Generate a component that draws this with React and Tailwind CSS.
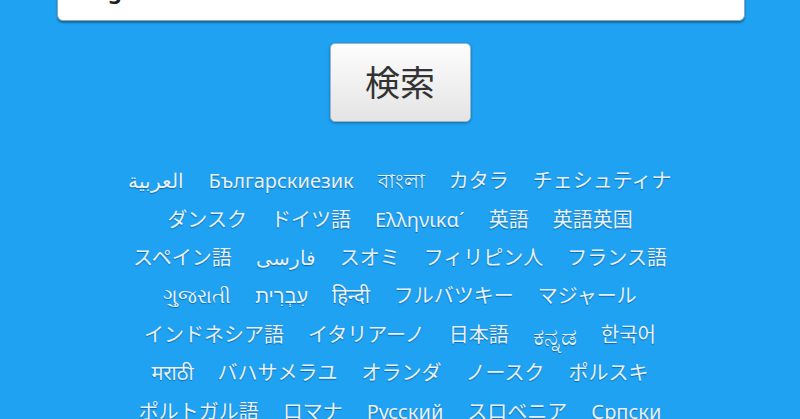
import React from "react";

const rows = [
  ["العربية", "Българскиезик", "বাংলা", "カタラ", "チェシュティナ"],
  ["ダンスク", "ドイツ語", "Ελληνικα´", "英語", "英語英国"],
  ["スペイン語", "فارسی", "スオミ", "フィリピン人", "フランス語"],
  ["ગુજરાતી", "עִבְרִית", "हिन्दी", "フルバツキー", "マジャール"],
  ["インドネシア語", "イタリアーノ", "日本語", "ಕನ್ನಡ", "한국어"],
  ["मराठी", "バハサメラユ", "オランダ", "ノースク", "ポルスキ"],
  ["ポルトガル語", "ロマナ", "Русский", "スロベニア", "Српски"],
];

export default function App() {
  return (
    <div
      className="w-[800px] h-[419px] overflow-hidden bg-[#1ea2f1] flex flex-col items-center"
      style={{ fontFamily: '"Noto Sans", "Noto Sans CJK JP", sans-serif' }}
    >
      <div className="w-full flex pl-[57px] shrink-0">
        <div className="w-[688px] h-[61px] -mt-[40px] bg-white rounded-[6px] border border-[#8aa6bd] shadow-[0_2px_2px_rgba(0,0,0,0.35)] pl-[50px] flex items-start shrink-0">
          <span className="text-[22px] font-bold text-[#222] leading-[22px] mt-[18px]">g</span>
        </div>
      </div>
      <button className="shrink-0 mt-[22px] w-[141px] h-[79px] rounded-[5px] border border-[#9fb3c4] bg-gradient-to-b from-[#fdfdfd] to-[#e4e4e4] shadow-[0_1px_3px_rgba(0,0,0,0.35)] text-[35px] text-[#333] flex items-center justify-center pb-[2px]"
        style={{ fontFamily: '"Noto Sans CJK JP", sans-serif' }}>
        検索
      </button>
      <div className="shrink-0 mt-[40px] flex flex-col items-center">
        {rows.map((r, i) => (
          <div key={i} className="shrink-0 h-[38.4px] flex items-center justify-center gap-[24px] whitespace-nowrap">
            {r.map((t, j) => (
              <span
                key={j}
                className={
                  (t === "ಕನ್ನಡ" ? "text-[25px] " : "text-[20px] ") +
                  "leading-[28px] text-[#e8f1fa] [text-shadow:0_1px_1px_rgba(0,40,90,0.45)]"
                }
              >
                {t}
              </span>
            ))}
          </div>
        ))}
      </div>
    </div>
  );
}
